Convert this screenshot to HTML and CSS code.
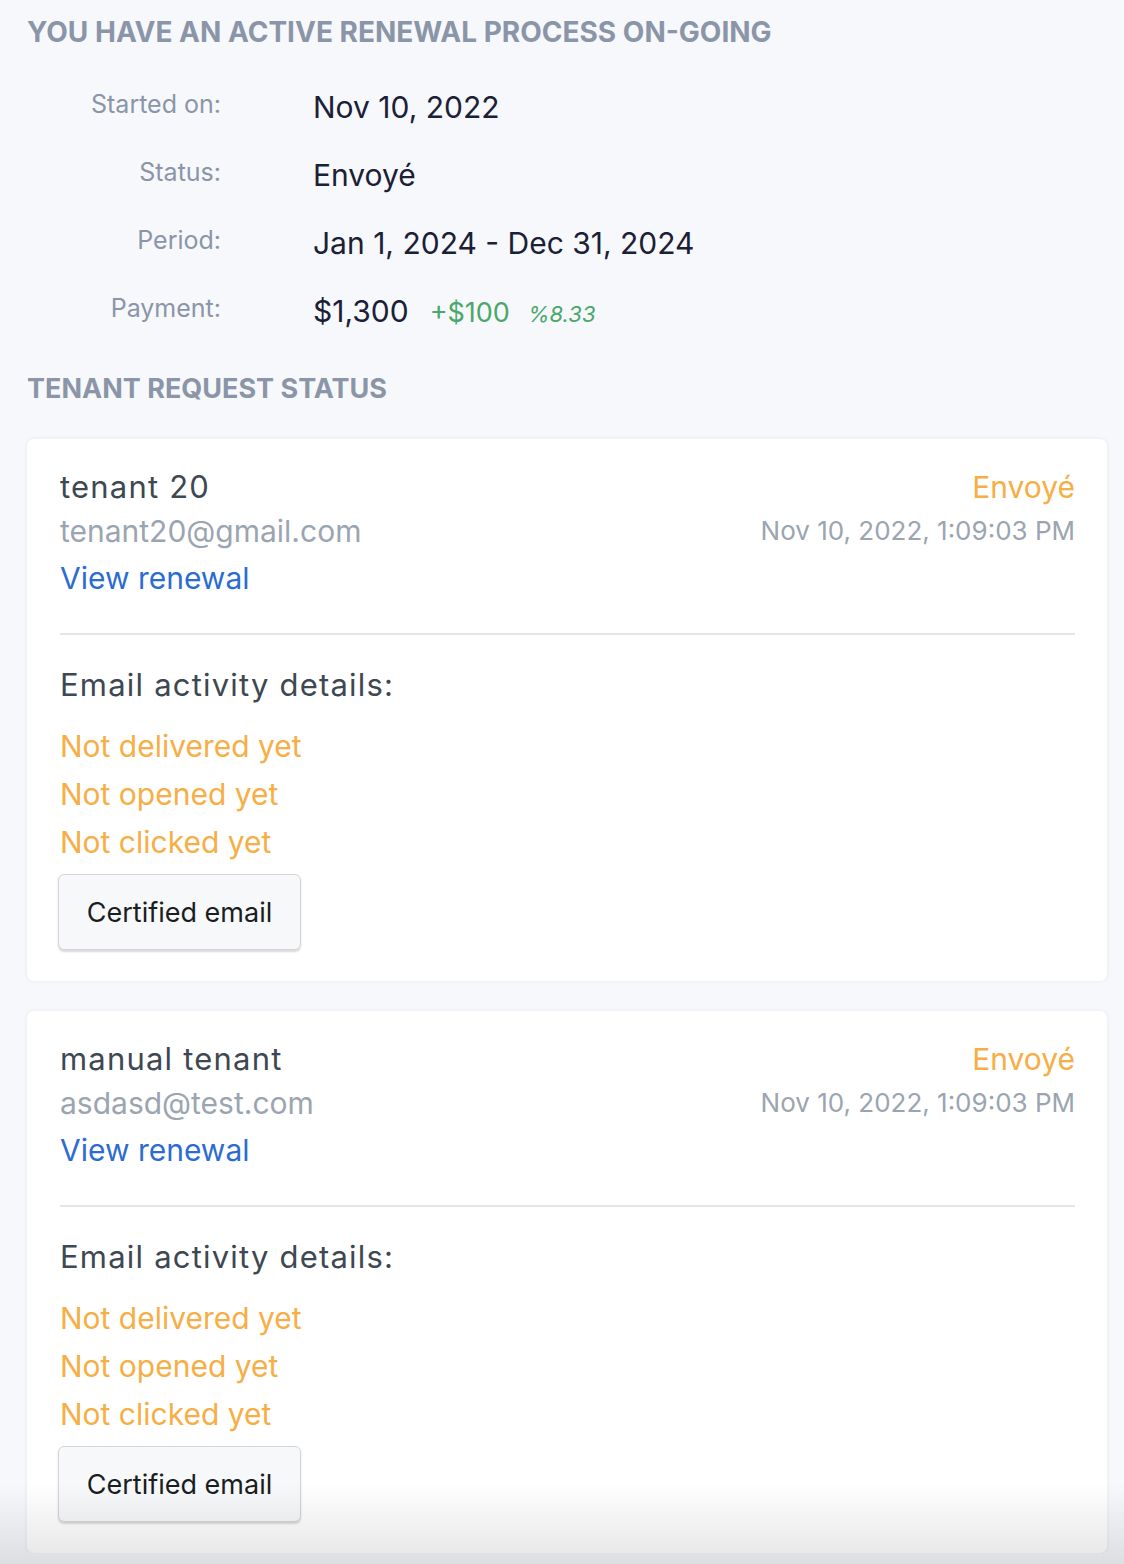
FILE: index.html
```html
<!DOCTYPE html>
<html lang="en">
<head>
  <meta charset="UTF-8" />
  <meta name="viewport" content="width=device-width, initial-scale=1.0"/>
  <title>Renewal status</title>
  <link rel="stylesheet" href="styles.css">
</head>
<body>

  <h2 class="section-title">You have an active renewal process on-going</h2>

  <div class="summary">
    <div class="summary-row">
      <span class="summary-label">Started on:</span>
      <span class="summary-value">Nov 10, 2022</span>
    </div>
    <div class="summary-row">
      <span class="summary-label">Status:</span>
      <span class="summary-value">Envoyé</span>
    </div>
    <div class="summary-row">
      <span class="summary-label">Period:</span>
      <span class="summary-value">Jan 1, 2024 - Dec 31, 2024</span>
    </div>
    <div class="summary-row">
      <span class="summary-label">Payment:</span>
      <span class="summary-value">$1,300</span>
      <span class="increase">+$100</span>
      <span class="percent">%8.33</span>
    </div>
  </div>

  <h2 class="section-title small">Tenant request status</h2>

  <div class="tenant-card">
    <div class="tenant-head">
      <div>
        <div class="tenant-name">tenant 20</div>
        <div class="tenant-email">tenant20@gmail.com</div>
        <a class="tenant-link" href="#">View renewal</a>
      </div>
      <div class="tenant-meta">
        <div class="tenant-status">Envoyé</div>
        <div class="tenant-date">Nov 10, 2022, 1:09:03 PM</div>
      </div>
    </div>
    <hr>
    <div class="activity-title">Email activity details:</div>
    <div class="activity-item">Not delivered yet</div>
    <div class="activity-item">Not opened yet</div>
    <div class="activity-item">Not clicked yet</div>
    <button type="button">Certified email</button>
  </div>

  <div class="tenant-card">
    <div class="tenant-head">
      <div>
        <div class="tenant-name">manual tenant</div>
        <div class="tenant-email">asdasd@test.com</div>
        <a class="tenant-link" href="#">View renewal</a>
      </div>
      <div class="tenant-meta">
        <div class="tenant-status">Envoyé</div>
        <div class="tenant-date">Nov 10, 2022, 1:09:03 PM</div>
      </div>
    </div>
    <hr>
    <div class="activity-title">Email activity details:</div>
    <div class="activity-item">Not delivered yet</div>
    <div class="activity-item">Not opened yet</div>
    <div class="activity-item">Not clicked yet</div>
    <button type="button">Certified email</button>
  </div>

  <div class="fade"></div>

</body>
</html>
```

FILE: styles.css
```css
body {
  font-family: Inter, "Noto Sans", sans-serif;
  background: #f7f8fc;
  margin: 0;
  padding: 15px 17px 0 27px;
}
.section-title {
  margin: 0;
  font-size: 28px;
  font-weight: 700;
  text-transform: uppercase;
  color: #8a96a8;
}
.section-title.small {
  font-size: 27px;
  margin-top: 11px;
}
.summary {
  padding-top: 40px;
}
.summary-row {
  display: flex;
  align-items: baseline;
  height: 68px;
}
.summary-label {
  width: 194px;
  text-align: right;
  font-size: 25px;
  line-height: 30px;
  padding-bottom: 6px;
  align-self: flex-start;
  color: #8a96a8;
  margin-right: 92px;
}
.summary-value {
  font-size: 30px;
  color: #1a2035;
}
.increase {
  font-size: 27px;
  color: #4aa86a;
  margin-left: 21px;
}
.percent {
  font-size: 22px;
  font-style: italic;
  color: #4aa86a;
  margin-left: 18px;
}
.tenant-card {
  background: #fff;
  border-radius: 7px;
  box-shadow: 0 0 4px rgba(0,0,0,0.07);
  padding: 26px 32px 31px 33px;
  margin-top: 30px;
}
.section-title.small + .tenant-card {
  margin-top: 34px;
}
.tenant-head {
  display: flex;
  justify-content: space-between;
}
.tenant-name {
  font-size: 31px;
  letter-spacing: 1.2px;
  color: #3d4852;
  line-height: 44px;
}
.tenant-email {
  font-size: 30px;
  color: #9aa5b1;
  line-height: 44px;
}
.tenant-link {
  display: block;
  font-size: 30px;
  color: #2b6cd4;
  line-height: 50px;
  text-decoration: none;
}
.tenant-meta {
  text-align: right;
}
.tenant-status {
  font-size: 30px;
  color: #f6ae45;
  line-height: 44px;
}
.tenant-date {
  font-size: 26px;
  color: #9aa5b1;
  line-height: 44px;
}
hr {
  border: none;
  border-top: 2px solid #e3e6ea;
  margin: 30px 0 27px;
}
.activity-title {
  font-size: 31px;
  letter-spacing: 1.2px;
  color: #3d4852;
  line-height: 46px;
  margin-bottom: 14px;
}
.activity-item {
  font-size: 30px;
  color: #f6ae45;
  line-height: 48px;
}
button {
  margin-top: 8px;
  margin-left: -2px;
  width: 243px;
  height: 76px;
  font-family: Inter, "Noto Sans", sans-serif;
  font-size: 27px;
  color: #1a1d22;
  background: #f7f8fa;
  border: 1px solid #d3d5d9;
  border-radius: 6px;
  box-shadow: 0 2px 2px rgba(0,0,0,0.15);
  cursor: pointer;
}
.fade {
  position: fixed;
  left: 0;
  right: 0;
  bottom: 0;
  height: 80px;
  background: linear-gradient(rgba(0,0,0,0), rgba(0,0,0,0.1));
  pointer-events: none;
}
```
